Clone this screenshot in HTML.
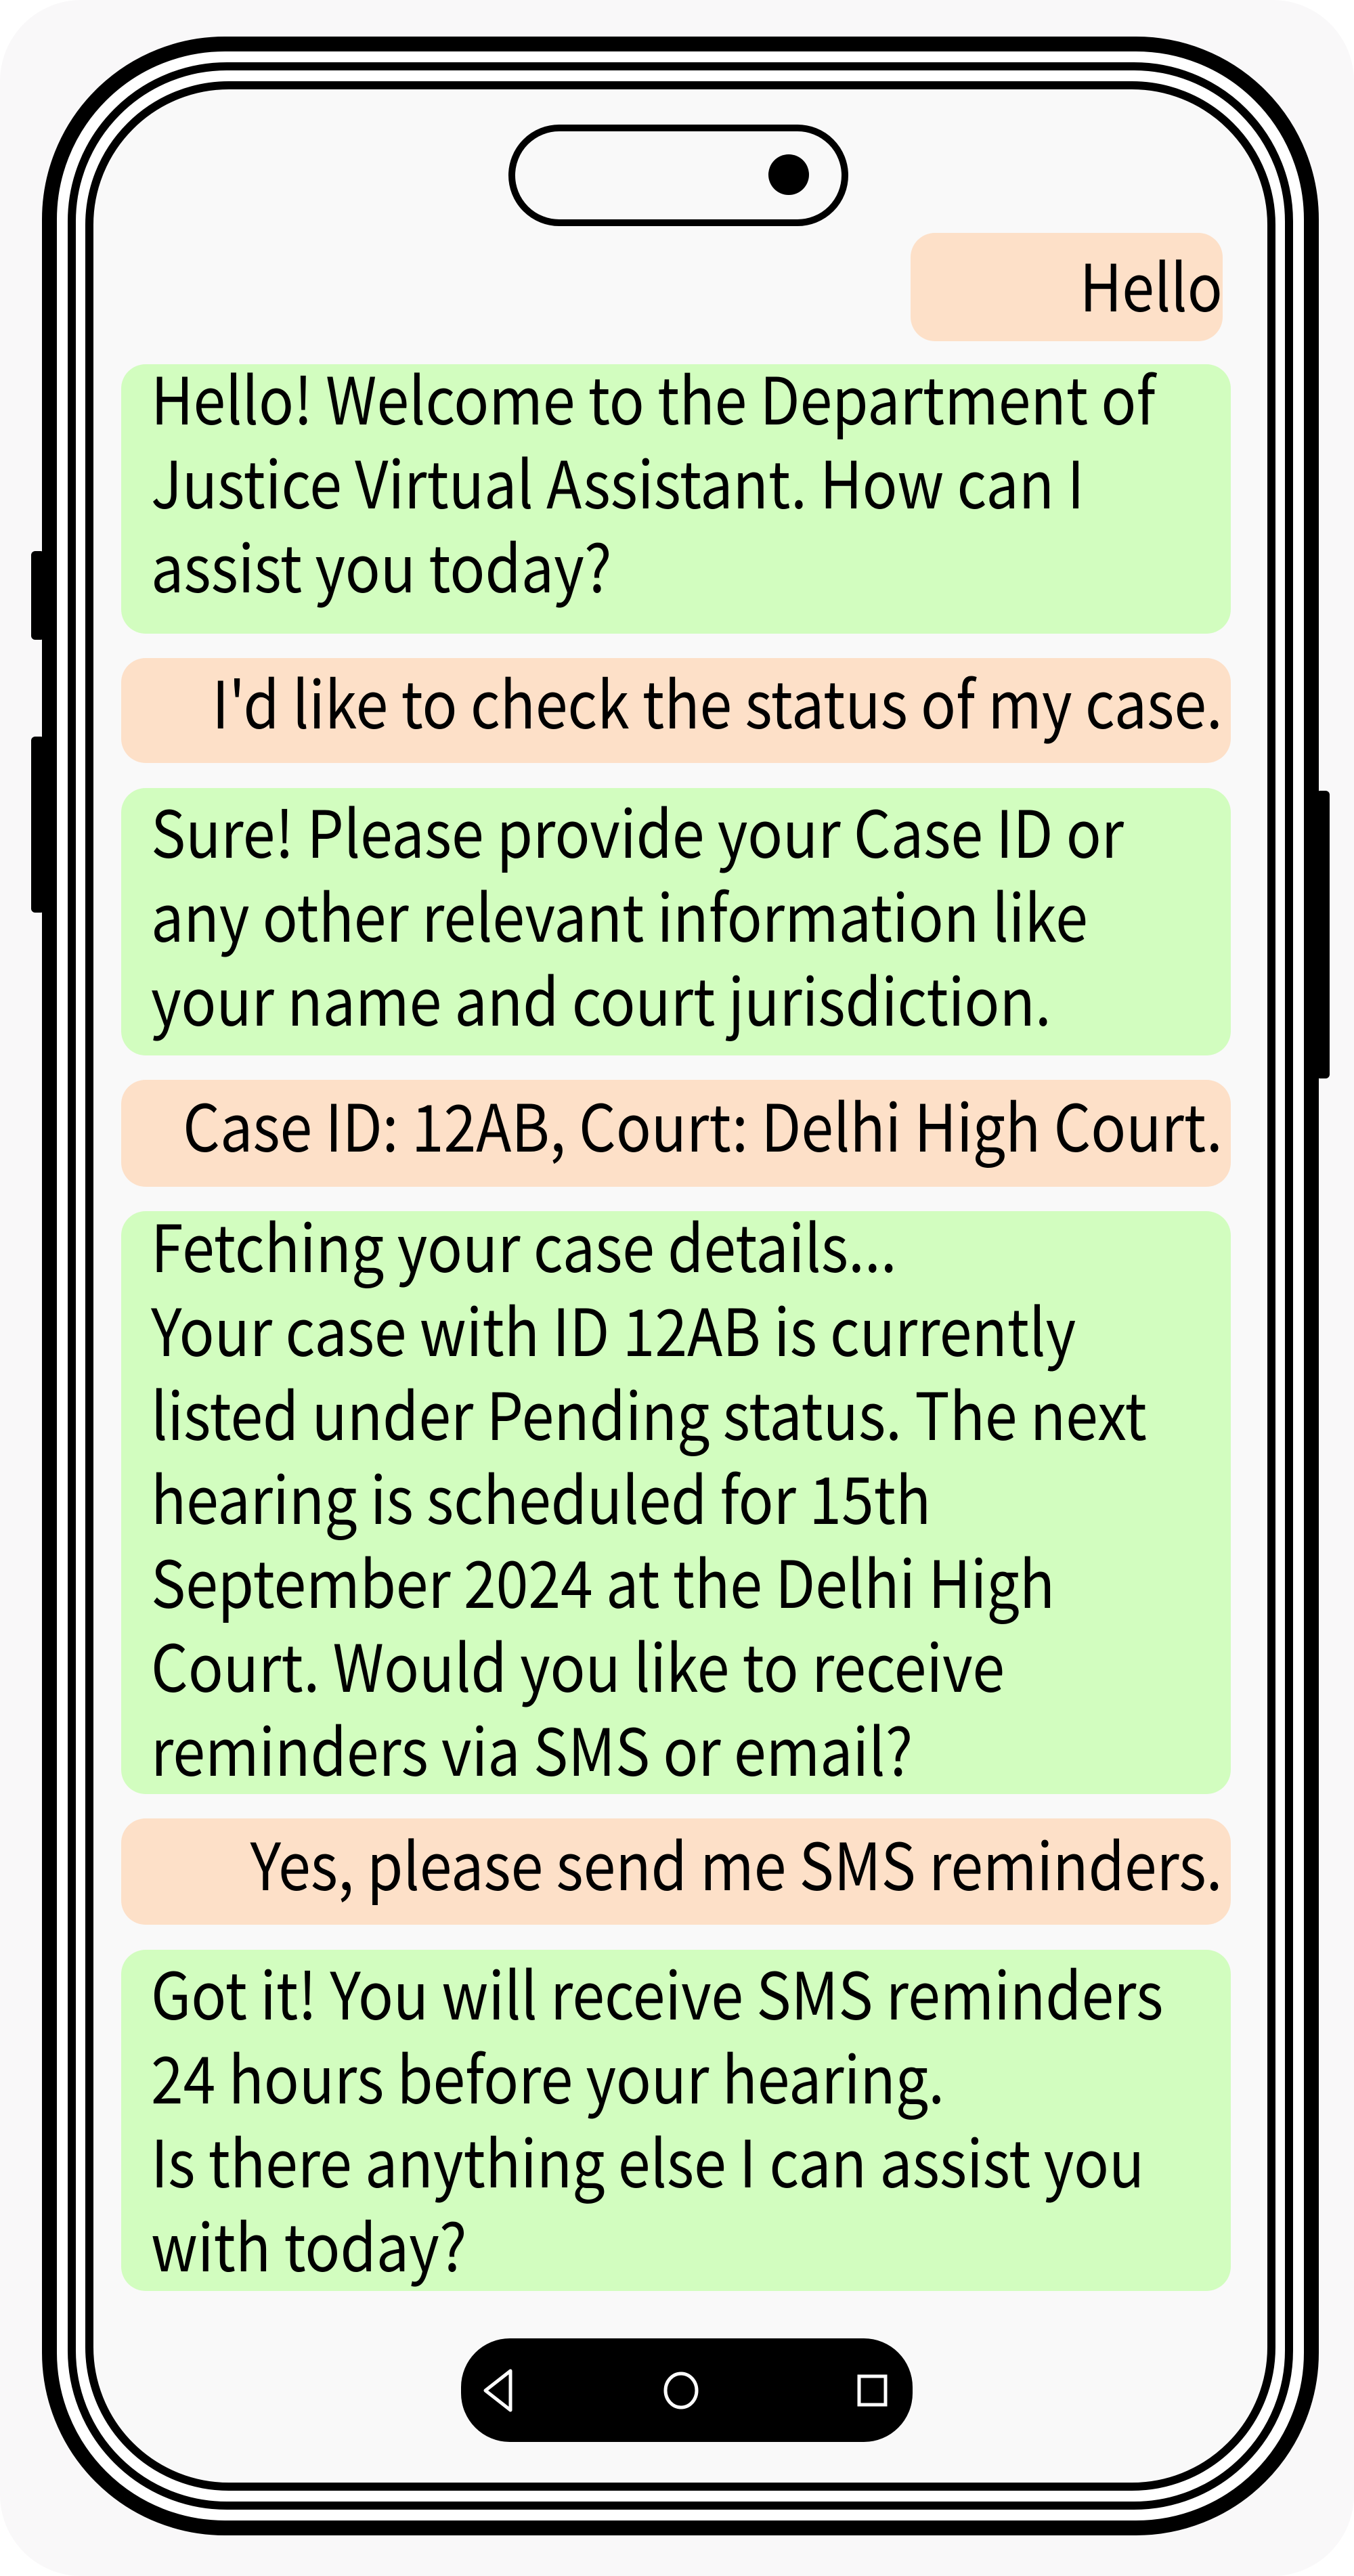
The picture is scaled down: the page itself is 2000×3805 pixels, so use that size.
<!DOCTYPE html>
<html><head><meta charset="utf-8"><style>
html,body{margin:0;padding:0;background:#fff;}
body{width:2000px;height:3805px;position:relative;overflow:hidden;font-family:"Noto Sans CJK JP","Liberation Sans",sans-serif;color:#000;}
.bg{position:absolute;left:0;top:0;width:2000px;height:3805px;background:#f9f8f9;border-radius:120px;}
.ring{position:absolute;box-sizing:border-box;border-style:solid;border-color:#000;}
.btn{position:absolute;background:#000;border-radius:6px;}
.b{position:absolute;border-radius:36px;}
.g{background:#d2fdbf;left:179px;width:1639px;}
.o{background:#fde0c8;}
.t{position:absolute;font-size:96px;line-height:124px;white-space:nowrap;}
.tl{left:223px;transform:scaleX(0.895);transform-origin:left top;}
.tr{right:194px;text-align:right;transform:scaleX(0.895);transform-origin:right top;}
</style></head><body>
<div class="bg"></div>
<div class="btn" style="left:46px;top:814px;width:20px;height:131px"></div>
<div class="btn" style="left:46px;top:1088px;width:20px;height:260px"></div>
<div class="btn" style="left:1944px;top:1168px;width:20px;height:425px"></div>
<div class="ring" style="left:62px;top:54px;width:1886px;height:3691px;border-width:22px;border-radius:270px;background:#fff"></div>
<div class="ring" style="left:100px;top:92px;width:1810px;height:3615px;border-width:12px;border-radius:235px"></div>
<div class="ring" style="left:126px;top:120px;width:1758px;height:3559px;border-width:12px;border-radius:212px;background:#f9f9f9"></div>
<div class="ring" style="left:751px;top:184px;width:502px;height:150px;border-width:10px;border-radius:75px"></div>
<div style="position:absolute;left:1135px;top:228px;width:60px;height:60px;border-radius:50%;background:#000"></div>

<div class="b o" style="left:1345px;top:344px;width:461px;height:160px"></div>
<div class="t tr" style="top:357px">Hello</div>

<div class="b g" style="top:538px;height:398px"></div>
<div class="t tl" style="top:524px">Hello! Welcome to the Department of<br>Justice Virtual Assistant. How can I<br>assist you today?</div>

<div class="b o" style="left:179px;width:1639px;top:972px;height:155px"></div>
<div class="t tr" style="top:973px">I'd like to check the status of my case.</div>

<div class="b g" style="top:1164px;height:395px"></div>
<div class="t tl" style="top:1164px">Sure! Please provide your Case ID or<br>any other relevant information like<br>your name and court jurisdiction.</div>

<div class="b o" style="left:179px;width:1639px;top:1595px;height:158px"></div>
<div class="t tr" style="top:1598px">Case ID: 12AB, Court: Delhi High Court.</div>

<div class="b g" style="top:1789px;height:861px"></div>
<div class="t tl" style="top:1776px">Fetching your case details...<br>Your case with ID 12AB is currently<br>listed under Pending status. The next<br>hearing is scheduled for 15th<br>September 2024 at the Delhi High<br>Court. Would you like to receive<br>reminders via SMS or email?</div>

<div class="b o" style="left:179px;width:1639px;top:2686px;height:157px"></div>
<div class="t tr" style="top:2689px">Yes, please send me SMS reminders.</div>

<div class="b g" style="top:2880px;height:504px"></div>
<div class="t tl" style="top:2880px">Got it! You will receive SMS reminders<br>24 hours before your hearing.<br>Is there anything else I can assist you<br>with today?</div>

<div style="position:absolute;left:681px;top:3454px;width:667px;height:153px;background:#000;border-radius:72px"></div>
<svg style="position:absolute;left:681px;top:3454px" width="667" height="153" viewBox="0 0 667 153">
<path d="M73 48 L73 106 L36 77 Z" fill="none" stroke="#fff" stroke-width="5" stroke-linejoin="round"/>
<ellipse cx="325" cy="77" rx="23" ry="25" fill="none" stroke="#fff" stroke-width="5"/>
<rect x="588" y="56" width="39" height="42" fill="none" stroke="#fff" stroke-width="5"/>
</svg>
</body></html>
